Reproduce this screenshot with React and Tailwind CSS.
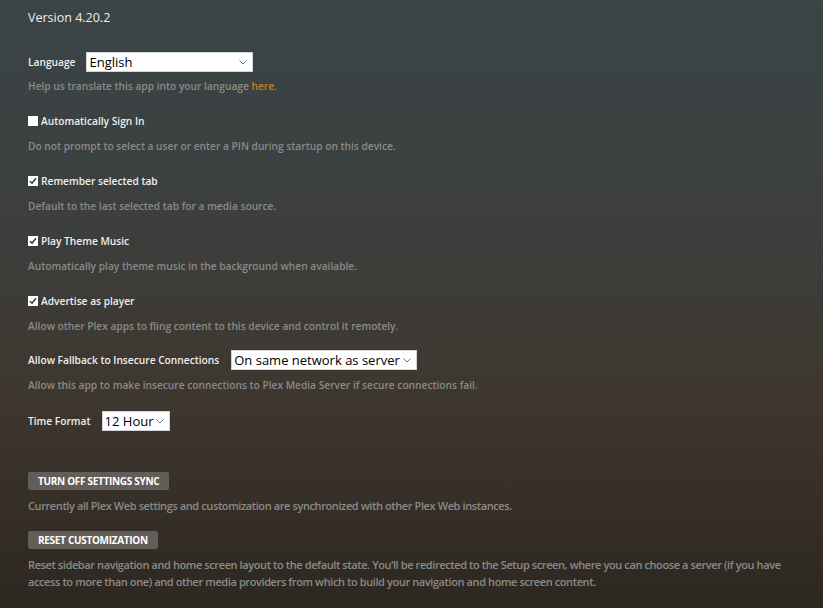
import React from 'react'

const font = { fontFamily: '"Open Sans", "Liberation Sans", sans-serif' }

const Chevron = () => (
  <svg width="8" height="5" viewBox="0 0 8 5" className="ml-auto shrink-0 text-gray-500">
    <path d="M0.5 0.5 L4 4 L7.5 0.5" fill="none" stroke="currentColor" strokeWidth="1" />
  </svg>
)

const SelectBox = ({ value, width }) => (
  <div className={`flex items-center h-5 bg-white border border-gray-300 pl-[2px] pr-[5px] text-black text-[13px] leading-none whitespace-nowrap ${width}`}>
    <span>{value}</span>
    <Chevron />
  </div>
)

const Checkbox = ({ checked }) => (
  <span className="w-[10px] h-[10px] bg-white flex items-center justify-center shrink-0">
    {checked && (
      <svg width="8" height="8" viewBox="0 0 8 8">
        <path d="M1 4.2 L3 6.3 L7 1.2" fill="none" stroke="#333" strokeWidth="1.4" />
      </svg>
    )}
  </span>
)

const Desc = ({ children, className = '' }) => (
  <p className={`font-semibold text-[#8b8a87] leading-[17px] ${className}`}>{children}</p>
)

const Label = ({ children }) => (
  <span className="pt-[2px] text-[10.2px] font-semibold text-[#eeeeee]">{children}</span>
)

const CheckRow = ({ label, desc, checked }) => (
  <div className="mt-[16px]">
    <label className="flex items-center gap-[3px] h-5 text-[10.2px] font-semibold text-[#eeeeee]">
      <Checkbox checked={checked} />
      <span className="pt-[1px]">{label}</span>
    </label>
    <Desc className="mt-[7px] text-[10.2px]">{desc}</Desc>
  </div>
)

const ActionButton = ({ children }) => (
  <button className="h-[18px] px-[10px] rounded-[2px] bg-[#625d58] text-white text-[10px] font-bold uppercase tracking-[-0.3px] leading-none">
    {children}
  </button>
)

export default function App() {
  return (
    <div
      className="min-h-screen h-[608px] overflow-hidden px-[28px] pt-[8px] bg-[linear-gradient(180deg,#3b4446_0%,#3c3f3e_35%,#3e372f_65%,#2d2721_100%)]"
      style={font}
    >
      <h1 className="text-[12.5px] text-[#eeeeee] leading-5">Version 4.20.2</h1>

      <div className="mt-[24px] flex items-center gap-[11px] h-5">
        <Label>Language</Label>
        <SelectBox value="English" width="w-[167px]" />
      </div>
      <Desc className="mt-[6px] text-[10.2px]">
        Help us translate this app into your language <a className="text-[#cc7b19]">here</a>.
      </Desc>

      <CheckRow checked={false} label="Automatically Sign In" desc="Do not prompt to select a user or enter a PIN during startup on this device." />
      <CheckRow checked label="Remember selected tab" desc="Default to the last selected tab for a media source." />
      <CheckRow checked label="Play Theme Music" desc="Automatically play theme music in the background when available." />
      <CheckRow checked label="Advertise as player" desc="Allow other Plex apps to fling content to this device and control it remotely." />

      <div className="mt-[15px] flex items-center gap-[12px] h-5">
        <Label>Allow Fallback to Insecure Connections</Label>
        <SelectBox value="On same network as server" width="w-[186px]" />
      </div>
      <Desc className="mt-[7px] text-[10.2px]">Allow this app to make insecure connections to Plex Media Server if secure connections fail.</Desc>

      <div className="mt-[17px] flex items-center gap-[11px] h-5">
        <Label>Time Format</Label>
        <SelectBox value="12 Hour" width="w-[68px]" />
      </div>

      <div className="mt-[41px] h-[18px] flex">
        <ActionButton>Turn off settings sync</ActionButton>
      </div>
      <Desc className="mt-[7px] text-[11px] tracking-[-0.4px]">Currently all Plex Web settings and customization are synchronized with other Plex Web instances.</Desc>

      <div className="mt-[17px] h-[18px] flex">
        <ActionButton>Reset customization</ActionButton>
      </div>
      <Desc className="mt-[7px] text-[11px] tracking-[-0.4px] max-w-[770px]">
        Reset sidebar navigation and home screen layout to the default state. You’ll be redirected to the Setup screen, where you can choose a server (if you have access to more than one) and other media providers from which to build your navigation and home screen content.
      </Desc>
    </div>
  )
}
